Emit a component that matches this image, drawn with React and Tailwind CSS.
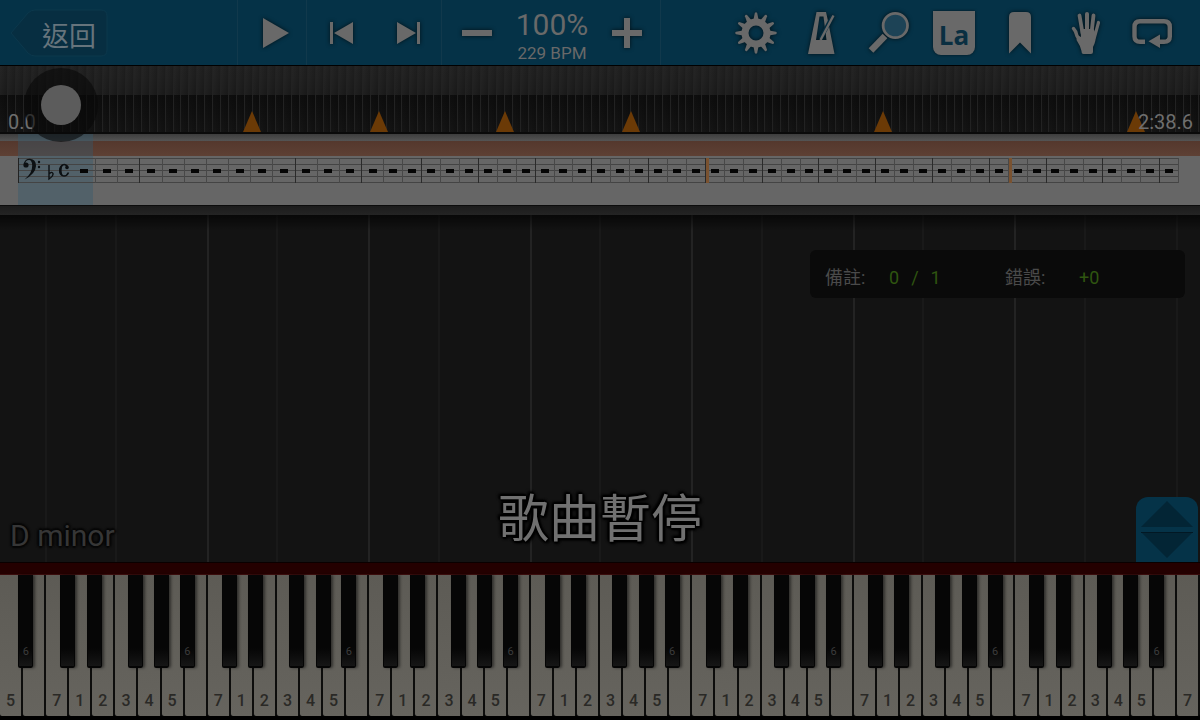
import React, { useState } from 'react';

const NOTES = ['A', 'B', 'C', 'D', 'E', 'F', 'G'];
const LABELS = { A: '5', B: '', C: '7', D: '1', E: '2', F: '3', G: '4' };

// where a black key starts, relative to the white key on its left
const SHARP_POS = {
  A: 'left-[87%]',
  C: 'left-[66%]',
  D: 'left-[83%]',
  F: 'left-[58%]',
  G: 'left-[74%]',
};

const whiteKeys = Array.from({ length: 52 }, (_, i) => {
  const note = NOTES[i % 7];
  return { id: i, note, label: LABELS[note] };
});

const markers = [21, 31.6, 42.1, 52.6, 73.6, 94.7];
const ticks = Array.from({ length: 152 }, (_, i) => i);

// the first bars are a bit wider than the rest
const bars = Array.from({ length: 55 }, (_, i) => ({
  id: i,
  wide: i < 13,
  strong: i === 1 || (i > 7 && i % 3 === 2),
  loop: i === 30 || i === 46,
}));

function ToolButton({ label, children }) {
  return (
    <button aria-label={label} className="flex h-full w-[66px] items-center justify-center text-[#696969]">
      {children}
    </button>
  );
}

function Icon({ children }) {
  return (
    <svg viewBox="0 0 48 48" className="h-12 w-12 drop-shadow-[0_0_2px_rgba(0,0,0,0.7)]" fill="currentColor" aria-hidden="true">
      {children}
    </svg>
  );
}

function GearIcon() {
  return (
    <Icon>
      {Array.from({ length: 12 }, (_, i) => (
        <path key={i} d="M21.4 11 L22.8 4 Q24 2.4 25.2 4 L26.6 11 Z" transform={`rotate(${i * 30} 24 24)`} />
      ))}
      <circle cx="24" cy="24" r="11" fill="none" stroke="currentColor" strokeWidth="7" />
    </Icon>
  );
}

function MetronomeIcon() {
  return (
    <Icon>
      <path fillRule="evenodd" d="M18.5 3 H28 L30 12 L36.5 45 H10 Z M21.5 7.5 L18 31 H28.5 L25.5 7.5 Z" />
      <path d="M34.5 7 L22.5 30" stroke="#052c3f" strokeWidth="4" />
      <path d="M35.5 6.5 L22.5 31" stroke="currentColor" strokeWidth="2.4" />
    </Icon>
  );
}

function SearchIcon() {
  return (
    <Icon>
      <path d="M7 41.5 L21 27" stroke="currentColor" strokeWidth="6.5" />
      <circle cx="31.3" cy="16.5" r="12.2" fill="#1d4356" stroke="currentColor" strokeWidth="2.8" />
    </Icon>
  );
}

function BookmarkIcon() {
  return (
    <Icon>
      <path d="M13 44.5 V8 Q13 3 18 3 H30 Q35 3 35 8 V44.5 L24 33.5 Z" />
    </Icon>
  );
}

function HandIcon() {
  return (
    <Icon>
      <g stroke="currentColor" strokeLinecap="round" fill="none">
        <path d="M17.5 6.5 L20.5 24" strokeWidth="3.8" />
        <path d="M25 5 V24" strokeWidth="4" />
        <path d="M31.5 6.5 L29.5 24" strokeWidth="3.8" />
        <path d="M36.5 13.5 L32.5 28" strokeWidth="3.2" />
        <path d="M11.5 19.5 Q14 22 15 27 L20 34" strokeWidth="3.4" />
      </g>
      <path d="M18.5 20 H31.5 L34 25 Q34 33 31 38 V43 Q31 45 29 45 H21.5 Q19.5 45 19.5 42 Q18.5 37 14.5 31 L15 26 L19 28 Z" />
    </Icon>
  );
}

function LoopIcon() {
  return (
    <Icon>
      <path
        d="M17 32.8 H12 Q6.5 32.8 6.5 27.5 V18 Q6.5 12.2 12 12.2 H36 Q41.8 12.2 41.8 18 V27.5 Q41.8 32.8 36 32.8 H30"
        fill="none"
        stroke="currentColor"
        strokeWidth="4.4"
      />
      <path d="M20.5 32.2 L32 25.5 V39 Z" />
    </Icon>
  );
}

function Toolbar() {
  return (
    <header className="flex h-[66px] items-stretch border-b border-black bg-[#053247] text-[#696969]">
      <div className="flex w-[238px] shrink-0 items-center border-r border-[#11394c] pl-[10px]">
        <button className="relative h-12 w-[98px] pt-1 pl-5 text-[27px] leading-[48px] text-[#66747c]">
          <svg viewBox="0 0 98 48" className="absolute inset-0 h-full w-full" aria-hidden="true">
            <path
              d="M1 24 L18 4 Q21 1 25 1 H91 Q97 1 97 7 V41 Q97 47 91 47 H25 Q21 47 18 44 Z"
              fill="#072e41"
              stroke="#0c384c"
            />
          </svg>
          <span className="relative">返回</span>
        </button>
      </div>

      <div className="flex w-[69px] shrink-0 items-center justify-center border-r border-[#11394c] pl-2">
        <button aria-label="播放">
          <svg viewBox="0 0 28 32" className="h-8 w-7 drop-shadow-[0_0_2px_rgba(0,0,0,0.7)]" fill="currentColor" aria-hidden="true">
            <path d="M1 1 L27 16 L1 31 Z" />
          </svg>
        </button>
      </div>

      <div className="flex w-[135px] shrink-0 items-center justify-end border-r border-[#11394c]">
        <ToolButton label="上一節">
          <svg viewBox="0 0 24 22" className="h-[22px] w-6 drop-shadow-[0_0_2px_rgba(0,0,0,0.7)]" fill="currentColor" aria-hidden="true">
            <path d="M0 0 H3 V22 H0 Z M23 0 V22 L4 11 Z" />
          </svg>
        </ToolButton>
        <ToolButton label="下一節">
          <svg viewBox="0 0 24 22" className="h-[22px] w-6 drop-shadow-[0_0_2px_rgba(0,0,0,0.7)]" fill="currentColor" aria-hidden="true">
            <path d="M21 0 H24 V22 H21 Z M1 0 V22 L20 11 Z" />
          </svg>
        </ToolButton>
      </div>

      <div className="flex w-[219px] shrink-0 items-center justify-between border-r border-[#11394c] pr-[17px] pl-[19px]">
        <button aria-label="減速">
          <svg viewBox="0 0 32 32" className="h-8 w-8 drop-shadow-[0_0_2px_rgba(0,0,0,0.7)]" fill="currentColor" aria-hidden="true">
            <path d="M1 13 H31 V19 H1 Z" />
          </svg>
        </button>
        <div className="pt-1 text-center">
          <div className="text-[30px] leading-[36px]">100%</div>
          <div className="text-[17px] leading-5">229 BPM</div>
        </div>
        <button aria-label="加速">
          <svg viewBox="0 0 32 32" className="h-8 w-8 drop-shadow-[0_0_2px_rgba(0,0,0,0.7)]" fill="currentColor" aria-hidden="true">
            <path d="M13 1 H19 V13 H31 V19 H19 V31 H13 V19 H1 V13 H13 Z" />
          </svg>
        </button>
      </div>

      <div className="flex flex-1 items-center justify-end pr-[15px]">
        <ToolButton label="設定"><GearIcon /></ToolButton>
        <ToolButton label="節拍器"><MetronomeIcon /></ToolButton>
        <ToolButton label="縮放"><SearchIcon /></ToolButton>
        <ToolButton label="音名">
          <span className="h-11 w-[42px] rounded-b-lg bg-[#696969] pt-1 font-['Open_Sans','Noto_Sans',sans-serif] text-[26px] leading-[40px] font-bold text-[#0a2f41] shadow-[0_0_3px_rgba(0,0,0,0.6)]">
            La
          </span>
        </ToolButton>
        <ToolButton label="書籤"><BookmarkIcon /></ToolButton>
        <ToolButton label="左右手"><HandIcon /></ToolButton>
        <ToolButton label="循環"><LoopIcon /></ToolButton>
      </div>
    </header>
  );
}

function Timeline() {
  const [position, setPosition] = useState(35);

  return (
    <div className="relative z-10 h-[68px] border-b-2 border-[#0a0a0a] bg-linear-to-b from-[#252525] to-[#181818]">
      <div className="flex h-full flex-col">
        <div className="h-[29px]" />
        <div className="flex-1 bg-linear-to-b from-[#0e0e0e] to-[#151515]" />
      </div>
      <div className="absolute inset-0 flex">
        {ticks.map(t => (
          <div key={t} className="flex-1 border-r border-[#222222] bg-linear-to-r from-transparent to-black/20" />
        ))}
      </div>

      {markers.map(m => (
        <svg key={m} viewBox="0 0 18 21" className="absolute bottom-0 h-[21px] w-[18px] -translate-x-1/2" style={{ left: `${m}%` }} aria-hidden="true">
          <path d="M9 0 L18 21 H0 Z" fill="#6b3a06" />
        </svg>
      ))}

      <span className="absolute bottom-0 left-2 text-xl leading-5 text-[#6e6e6e]">0.0</span>
      <span className="absolute right-[7px] bottom-0 text-xl leading-5 text-[#6e6e6e]">2:38.6</span>

      <input
        type="range"
        aria-label="播放位置"
        min="0"
        max="1000"
        value={position}
        onChange={e => setPosition(Number(e.target.value))}
        className="absolute top-[19px] left-0 h-10 w-full appearance-none bg-transparent [&::-webkit-slider-thumb]:h-10 [&::-webkit-slider-thumb]:w-10 [&::-webkit-slider-thumb]:appearance-none [&::-webkit-slider-thumb]:rounded-full [&::-webkit-slider-thumb]:bg-[#5c5c5c] [&::-webkit-slider-thumb]:shadow-[0_0_0_17px_rgba(8,8,8,0.6)]"
      />
    </div>
  );
}

function Score() {
  return (
    <section className="relative h-[71px] bg-[#666666]">
      <div className="h-[7px] bg-linear-to-b from-[#3d3d3d] to-[#545454]" />
      <div className="h-[15px] bg-linear-to-b from-[#54382d] to-[#5e4034]" />
      <div className="absolute inset-y-0 left-[18px] w-[75px] bg-[#35596d]/40" />

      <div className="relative mt-[2px] mr-[21px] ml-[18px] flex h-[25px] border-l border-[#222] bg-[repeating-linear-gradient(to_bottom,#444444_0px,#444444_1px,transparent_1px,transparent_6px)]">
        <div className="flex w-[77px] shrink-0 items-center justify-between border-r border-[#484848] pr-[7px]">
          <svg viewBox="0 0 56 25" className="h-[25px] w-14" aria-hidden="true">
            <circle cx="7" cy="7" r="2.6" fill="#0c1013" />
            <path d="M4.6 6 Q6 0.6 11 0.8 Q17 1.4 17 8 Q16.5 16 5.5 21.5 Q13.5 15 13.2 7.5 Q13 2 10 2 Q6.5 2 6 6 Z" fill="#0c1013" />
            <circle cx="20" cy="4" r="1.2" fill="#0c1013" />
            <circle cx="20" cy="9" r="1.2" fill="#0c1013" />
            <path d="M30 7 V21 Q34.5 18 34 15.5 Q33 13 30 16" fill="none" stroke="#0c1013" strokeWidth="1.4" />
            <path d="M48.5 8.5 Q46 5.5 43.5 7 Q41 8.8 41 12.5 Q41.5 18 45 18 Q48 18 49.5 14.5" fill="none" stroke="#0c1013" strokeWidth="1.6" />
            <path d="M43.5 7 Q40 8.5 40 12.5 Q40 17 43.8 18 Q42.6 15 42.6 12.5 Q42.6 9 43.5 7 Z" fill="#0c1013" />
            <circle cx="48" cy="9.4" r="1.8" fill="#0c1013" />
          </svg>
          <span className="h-1 w-2 bg-[#050505]" />
        </div>
        {bars.map(bar => (
          <div
            key={bar.id}
            className={`relative flex items-center justify-center border-r ${bar.strong ? 'border-[#2a2a2a]' : 'border-[#484848]'} ${bar.wide ? 'grow-[13]' : 'grow-[11]'} basis-0`}
          >
            {bar.loop && <span className="absolute inset-y-0 left-0 w-[3px] bg-[#7a5230]" />}
            <span className="h-1 w-2 bg-[#050505]" />
          </div>
        ))}
      </div>
    </section>
  );
}

function Stage() {
  return (
    <main className="relative min-h-[200px] flex-1 bg-[#131313]">
      <div className="absolute inset-0 flex">
        {whiteKeys.map(({ id, note }) => {
          const bright = note === 'B' && id > 1 && id < 50;
          const dim = note === 'E' || (note === 'B' && !bright);
          return (
            <div
              key={id}
              className={`flex-1 ${bright ? 'border-r-2 border-[#232323]' : ''} ${dim ? 'border-r-2 border-[#191919]' : ''}`}
            />
          );
        })}
      </div>
      <div className="absolute inset-x-0 top-0 h-4 bg-linear-to-b from-black/60 to-transparent" />

      <dl className="absolute top-[35px] right-[15px] flex h-12 w-[375px] items-center rounded-md bg-[#0a0a0a] pt-2 pl-[15px] text-lg">
        <dt className="w-16 text-[#4a4a4a]">備註:</dt>
        <dd className="flex w-[116px] gap-3 text-[#2f5510]">
          <span>0</span>
          <span>/</span>
          <span>1</span>
        </dd>
        <dt className="w-[74px] text-[#4a4a4a]">錯誤:</dt>
        <dd className="text-[#2f5510]">+0</dd>
      </dl>

      <div className="absolute inset-x-0 bottom-0 flex justify-center">
        <h1 className="pb-2 text-[51px] leading-[68px] text-[#707070] [text-shadow:2px_0_2px_#000,-2px_0_2px_#000,0_2px_2px_#000,0_-2px_2px_#000,2px_2px_3px_#000,-2px_-2px_3px_#000]">
          歌曲暫停
        </h1>
      </div>

      <p className="absolute bottom-2 left-[10px] text-[30px] leading-9 text-[#363636] [text-shadow:2px_0_2px_#060606,-2px_0_2px_#060606,0_2px_2px_#060606,0_-2px_2px_#060606]">
        D minor
      </p>

      <button aria-label="鍵盤大小" className="absolute right-[2px] bottom-0 rounded-t-xl bg-[#053348]">
        <svg viewBox="0 0 62 65" className="h-[65px] w-[62px]" aria-hidden="true">
          <path d="M31 4 L57 30 H5 Z M5 35 H57 L31 61 Z" fill="#032535" />
          <path d="M5 35.5 H57" stroke="#021824" />
        </svg>
      </button>
    </main>
  );
}

function Keyboard() {
  return (
    <footer className="bg-black pb-1">
      <div className="h-[13px] border-t border-b border-t-[#0a0000] border-b-[#3a0c0c] bg-[#240000]" />
      <div className="flex h-[141px]">
        {whiteKeys.map(({ id, note, label }) => (
          <button
            key={id}
            className="relative flex flex-1 items-end justify-center rounded-b-xs border-r-2 border-[#0d0d0c] bg-linear-to-b from-[#5d5b55] to-[#66645e] pb-1 text-base leading-[22px] font-medium text-[#2a2926]"
          >
            {label}
            {SHARP_POS[note] && id < 51 && (
              <span
                className={`absolute top-0 z-10 flex h-[93px] w-[15px] items-end justify-center rounded-b-xs border-x border-b-2 border-[#050505] bg-linear-to-b from-[#060606] from-80% to-[#161616] pb-2 text-[11px] leading-3 font-normal text-[#3c3c3c] shadow-[2px_0_3px_rgba(0,0,0,0.5)] ${SHARP_POS[note]}`}
              >
                {note === 'A' ? '6' : ''}
              </span>
            )}
          </button>
        ))}
      </div>
    </footer>
  );
}

export default function App() {
  return (
    <div className="flex min-h-screen flex-col overflow-hidden bg-[#131313] font-[Roboto,'Noto_Sans_CJK_TC',sans-serif]">
      <Toolbar />
      <Timeline />
      <Score />
      <div className="h-[10px] border-t border-[#0c0c0c] bg-linear-to-b from-[#1c1c1c] to-[#242424]" />
      <Stage />
      <Keyboard />
    </div>
  );
}
